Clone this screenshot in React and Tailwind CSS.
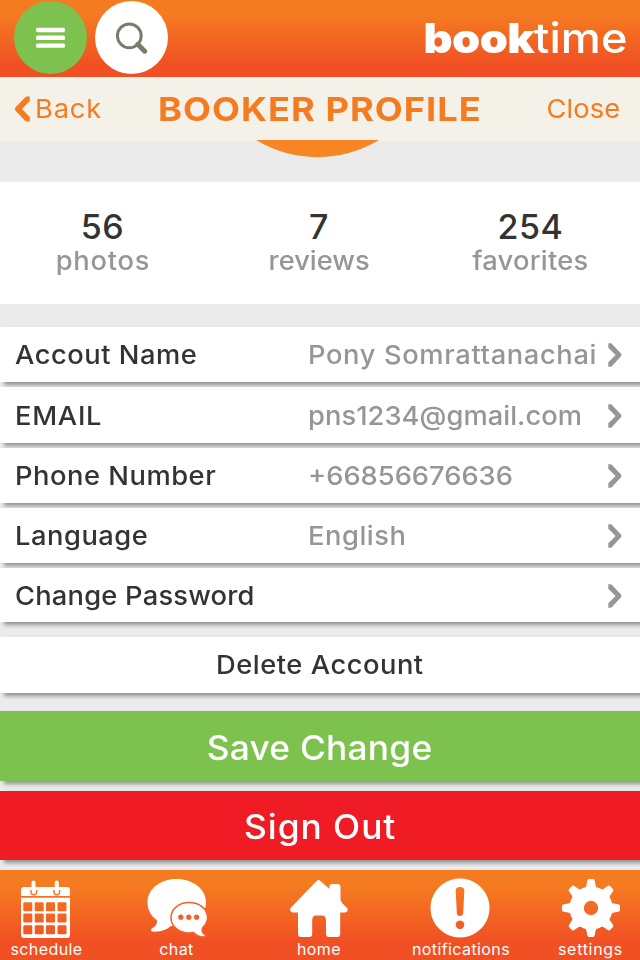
import React from "react";

const INK = "text-[#333333]";

function Chevron() {
  return (
    <svg className="h-[24px] w-[14px] shrink-0" viewBox="0 0 14 24" fill="#969696">
      <path d="M0.3 0.3H2.6Q3.4 0.3 4 0.9L13 10.6Q14 12 13 13.3L4 23Q3.4 23.7 2.6 23.7H0.3V19.2L7.6 12L0.3 4.8Z" />
    </svg>
  );
}

function Row({ label, value, height, labelTracking, valueTracking }) {
  return (
    <div className={`flex ${height} shrink-0 items-center bg-white pl-[15px] pr-[18px] pt-px text-[26px] leading-none shadow-[4px_3px_4px_rgba(0,0,0,0.38)]`}>
      <span className={`w-[293px] origin-left scale-x-105 font-medium whitespace-nowrap ${INK} ${labelTracking}`}>{label}</span>
      <span className={`flex-1 origin-left scale-x-105 font-medium whitespace-nowrap text-[#969696] ${valueTracking}`}>{value}</span>
      <Chevron />
    </div>
  );
}

function Stat({ value, label, tracking }) {
  return (
    <div className="flex flex-col items-center pt-[28px]">
      <span className={`text-[34px] font-medium leading-[34px] tracking-[0.5px] ${INK}`}>{value}</span>
      <span className={`scale-x-105 text-[26px] font-medium leading-[34px] text-[#969696] ${tracking}`}>{label}</span>
    </div>
  );
}

function NavItem({ label, tracking, children }) {
  return (
    <div className="flex flex-col items-center pt-[8px]">
      <svg className="h-[60px] w-[60px]" viewBox="0 0 60 60" fill="#fff">
        {children}
      </svg>
      <span className={`mt-[3px] text-[16px] leading-[16px] whitespace-nowrap text-white ${tracking}`}>{label}</span>
    </div>
  );
}

const TEETH = [0, 45, 90, 135, 180, 225, 270, 315];
const CELL_X = [7.3, 18.7, 30, 41.5];
const CELL_Y = [24.2, 35.6, 47.3];

export default function App() {
  return (
    <div className="flex h-[960px] w-[640px] flex-col overflow-hidden bg-[#ebebeb] font-['Inter','Liberation_Sans',sans-serif]">
      <header className="flex h-[77px] shrink-0 items-start bg-[linear-gradient(180deg,#f57b21_0%,#f57b21_18%,#f05023_85%,#f05023_100%)] pl-[14px] pr-[13px] pt-px">
        <div className="flex size-[73px] items-center justify-center rounded-full bg-[#7dc24f]">
          <svg className="h-[21px] w-[30px]" viewBox="0 0 30 21" fill="#fff">
            <rect x="0" y="0.8" width="29" height="4.4" rx="1.6" />
            <rect x="0" y="8.6" width="29" height="4.4" rx="1.6" />
            <rect x="0" y="16.4" width="29" height="4.4" rx="1.6" />
          </svg>
        </div>
        <div className="ml-[8px] flex size-[73px] items-center justify-center rounded-full bg-white">
          <svg className="size-[32px]" viewBox="0 0 32 32" fill="none" stroke="#7d796d">
            <circle cx="13.3" cy="13.8" r="11.9" strokeWidth="3" />
            <path d="M21.8 22.3L28.7 29.2" strokeWidth="5" strokeLinecap="round" />
          </svg>
        </div>
        <div className="ml-auto flex h-[74px] origin-right scale-x-110 items-center text-[41px] leading-none text-white">
          <span className="font-black tracking-[-0.5px]">book</span>
          <span className="font-medium tracking-[0px]">time</span>
        </div>
      </header>

      <div className="flex h-[64px] shrink-0 items-center bg-[#f4f1e9] pl-[14px] pr-[20px] leading-none text-[#f57b21]">
        <svg className="h-[26px] w-[16px]" viewBox="0 0 16 26" fill="#f57b21">
          <path d="M15.8 0.4H13Q12 0.4 11.3 1.2L1.4 11.4Q0.2 13 1.4 14.4L11.3 24.9Q12 25.6 13 25.6H15.8V20.9L8 13L15.8 5.1Z" />
        </svg>
        <span className="ml-[5px] w-[123px] origin-left scale-x-105 text-[26px] tracking-[0.8px]">Back</span>
        <span className="origin-left scale-x-110 text-[33px] font-bold tracking-[0.9px] whitespace-nowrap">BOOKER PROFILE</span>
        <span className="ml-auto origin-right scale-x-105 text-[26px] tracking-[0.1px]">Close</span>
      </div>

      <div className="relative h-[41px] shrink-0">
        <svg className="absolute -top-px left-[256px] h-[18px] w-[124px]" viewBox="0 0 124 18" fill="#f78521">
          <path d="M0 0A118.6 118.6 0 0 0 123 0Z" />
        </svg>
      </div>

      <section className="grid h-[122px] shrink-0 grid-cols-[205px_228px_195px] bg-white">
        <Stat value="56" label="photos" tracking="tracking-[0.7px]" />
        <Stat value="7" label="reviews" tracking="tracking-[0px]" />
        <Stat value="254" label="favorites" tracking="tracking-[0.2px]" />
      </section>

      <section className="mt-[23px] flex shrink-0 flex-col gap-[5px]">
        <Row label="Accout Name" value="Pony Somrattanachai" height="h-[55px]" labelTracking="tracking-[0.5px]" valueTracking="tracking-[0.6px]" />
        <Row label="EMAIL" value="pns1234@gmail.com" height="h-[56px]" labelTracking="tracking-[0.7px]" valueTracking="tracking-[0.05px]" />
        <Row label="Phone Number" value="+66856676636" height="h-[55px]" labelTracking="tracking-[0.5px]" valueTracking="tracking-[0px]" />
        <Row label="Language" value="English" height="h-[55px]" labelTracking="tracking-[0.5px]" valueTracking="tracking-[0.5px]" />
        <Row label="Change Password" value="" height="h-[54px]" labelTracking="tracking-[0.2px]" valueTracking="tracking-[0px]" />
      </section>

      <button className={`mt-[15px] flex h-[56px] shrink-0 items-center justify-center bg-white text-[26px] font-medium leading-none tracking-[0.5px] shadow-[4px_3px_4px_rgba(0,0,0,0.38)] ${INK}`}>
        <span className="scale-x-105">Delete Account</span>
      </button>
      <button className="mt-[18px] flex h-[70px] shrink-0 items-center justify-center bg-[#7dc24f] pt-[4px] text-[34px] font-medium leading-none tracking-[0.2px] text-white shadow-[4px_3px_4px_rgba(0,0,0,0.38)]">
        <span className="scale-x-104">Save Change</span>
      </button>
      <button className="mt-[10px] flex h-[69px] shrink-0 items-center justify-center bg-[#ef1c25] pt-[3px] text-[34px] font-medium leading-none tracking-[0.9px] text-white shadow-[4px_3px_4px_rgba(0,0,0,0.38)]">
        <span className="scale-x-104">Sign Out</span>
      </button>

      <nav className="relative mt-[10px] grid h-[90px] shrink-0 grid-cols-[92px_169px_116px_166px_97px] bg-[linear-gradient(180deg,#f57b21_0%,#f57b21_18%,#f05023_80%,#f05023_100%)]">
        <NavItem label="schedule" tracking="tracking-[0.4px] pl-px">
          <path
            fillRule="evenodd"
            d={
              "M5 12Q5 9 8 9H15.5V4.5Q15.5 2.5 17.5 2.5Q19.5 2.5 19.5 4.5V9H38.8V4.5Q38.8 2.5 40.8 2.5Q42.8 2.5 42.8 4.5V9H51Q54 9 54 12V18H5Z" +
              "M5 19.8H54V57Q54 60 51 60H8Q5 60 5 57Z" +
              CELL_Y.map((y) => CELL_X.map((x) => `M${x + 1} ${y}h7q1 0 1 1v7q0 1-1 1h-7q-1 0-1-1v-7q0-1 1-1Z`).join("")).join("")
            }
          />
          <g fill="none" stroke="#f4742c" strokeWidth="1.5">
            <path d="M15 12Q14.300 16.700 17.800 16.700Q21.300 16.700 20.600 12" />
            <path d="M38 12Q37.300 16.700 40.800 16.700Q44.300 16.700 43.600 12" />
          </g>
        </NavItem>
        <NavItem label="chat" tracking="tracking-[0.4px]">
          <path d="M29.5 1C46 1 59 11 59 24.5C59 38 46 48 30 48H24C20 51.5 12 54.5 5.5 53.5C3.5 53 3.5 51.5 5 50.5C9 48 10.5 45.5 9.8 42C4 38 0.5 32 0.5 24.5C0.5 11 13 1 29.5 1Z" />
          <path
            stroke="#f1602a"
            strokeWidth="1.5"
            d="M42 24.5C52.5 24.5 60.6 31 60.6 39.5C60.6 44 58 47.5 55.5 50C54.5 53.500 56 56 60 58C55 60 50 58.500 46.500 54.600C33 56.500 24 49 24 39.500C24 31 32 24.500 42 24.500Z"
          />
          <g fill="#f1602a">
            <circle cx="33.8" cy="39.2" r="2.6" fill="#f1602a" />
            <circle cx="41.8" cy="39.2" r="2.6" />
            <circle cx="49.6" cy="39.2" r="2.6" />
          </g>
        </NavItem>
        <NavItem label="home" tracking="tracking-[0.4px]">
          <path d="M27.3 3.2Q29.5 1 31.7 3.2L40.5 11V8.5Q40.5 6 43 6H48.5Q51.5 6 51.5 9V21Q51.7 23.5 53.5 25.5L58.3 30.3Q59.5 34 56 34.5H51.2V56Q51.2 59 48.5 59H40Q37 59 37 56V42.5Q37 37.5 33 37.5H27Q23.2 37.5 23.2 42.5V56Q23.2 59 20.5 59H12Q9 59 9 56V34.5H4Q0.5 34 1.3 30.3Z" />
        </NavItem>
        <NavItem label="notifications" tracking="tracking-[0.4px] pl-[2px]">
          <path
            fillRule="evenodd"
            d="M30 0.5A29.5 29.5 0 1 1 29.99 0.5ZM30 9Q34.5 9 34.3 13L33.2 34.5Q33 38 30 38Q27 38 26.8 34.5L25.7 13Q25.5 9 30 9ZM30 42.4A4.3 4.3 0 1 1 29.99 42.4Z"
          />
        </NavItem>
        <NavItem label="settings" tracking="tracking-[0.7px] pr-[2px]">
          <mask id="gear-hub">
            <rect width="60" height="60" fill="#fff" />
            <circle cx="29" cy="30" r="7.2" fill="#000" />
          </mask>
          <g mask="url(#gear-hub)">
            <circle cx="29" cy="30" r="21.6" />
            {TEETH.map((angle) => (
              <path
                key={angle}
                transform={`rotate(${angle} 29 30)`}
                d="M21.5 11.500Q24.100 10 24.500 7L25.200 3Q25.500 1 27 1H31Q32.500 1 32.800 3L33.500 7Q33.900 10 36.500 11.500Z"
              />
            ))}
          </g>
        </NavItem>
      </nav>
    </div>
  );
}
